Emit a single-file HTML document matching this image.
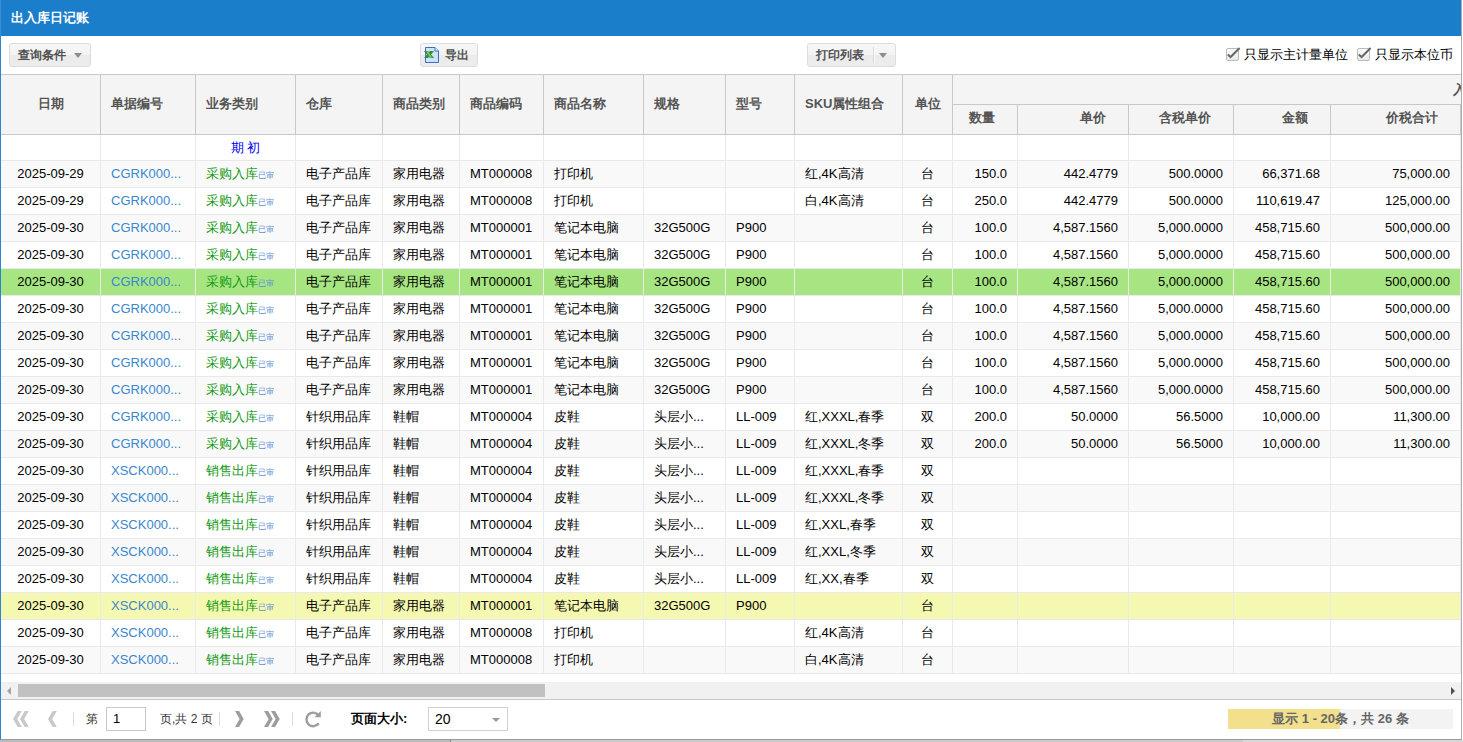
<!DOCTYPE html>
<html><head><meta charset="utf-8">
<style>
*{margin:0;padding:0;box-sizing:border-box}
html,body{width:1463px;height:742px;overflow:hidden;background:#fff}
body{font-family:"Liberation Sans",sans-serif;font-size:13px;color:#000;position:relative}
.a{position:absolute}
#panel{left:0;top:0;width:1462px;height:740px;border-left:1px solid #2a86d0;border-right:1px solid #acacac;border-bottom:1px solid #9a9a9a;background:#fff}
#title{left:0;top:0;width:1461px;height:36px;background:#1a7ecb;color:#fff;font-weight:bold;font-size:13px;line-height:36px;padding-left:11px}
.btn{height:24px;border:1px solid #dcdcdc;border-radius:3px;background:linear-gradient(#f7f7f7 0,#f3f3f3 50%,#ebebeb 50%,#ececec 100%);color:#505050;font-weight:bold;font-size:12px;line-height:22px}
.hd{background:#f4f4f4;color:#555;font-weight:bold;font-size:13px}
.ht{color:#555;font-weight:bold;font-size:13px;white-space:nowrap}
.vl{width:1px;background:#c8c8c8}
.hl{height:1px;background:#c8c8c8}
.cell{white-space:nowrap;overflow:hidden;line-height:26px;height:26px}
.dl{width:1px;background:#eaeaea}
.rl{height:1px;background:#e9e9e9}
</style></head><body>
<div id="panel" class="a"></div>
<div id="title" class="a">出入库日记账</div>
<div class="a" style="left:0;top:0;width:1px;height:36px;background:#3b90d4"></div>

<div class="a btn" style="left:9px;top:43px;width:82px;padding-left:8px">查询条件<svg class="a" style="left:64px;top:9px" width="8" height="5" viewBox="0 0 8 5"><polygon points="0,0 8,0 4,5" fill="#8c8c8c"/></svg></div>
<div class="a btn" style="left:420px;top:43px;width:58px;padding-left:24px">导出<svg class="a" style="left:3px;top:3px" width="17" height="18" viewBox="0 0 17 18"><path d="M1.5 0.5h9.5l3.5 3.5v11.5h-13z" fill="#cde1f8" stroke="#3b6fc4" stroke-width="1"/><path d="M11 0.5v3.5h3.5" fill="#f2f7fd" stroke="#3b6fc4" stroke-width="1"/><polygon points="0,4 4.2,4 5,5.6 5.8,4 10,4 7,7.5 10,11 5.8,11 5,9.4 4.2,11 0,11 3,7.5" fill="#2f8f2f"/><polygon points="2.2,4.5 4,4.5 8,10.5 6.2,10.5" fill="#86c986"/></svg></div>
<div class="a btn" style="left:807px;top:43px;width:89px;padding-left:8px">打印列表<span class="a" style="left:65px;top:3px;width:1px;height:16px;background:#d8d8d8;box-shadow:1px 0 0 #fafafa"></span><svg class="a" style="left:71px;top:9px" width="8" height="5" viewBox="0 0 8 5"><polygon points="0,0 8,0 4,5" fill="#8c8c8c"/></svg></div>
<div class="a" style="left:1226px;top:48px;width:13px;height:13px;border:1px solid #bbb;border-radius:2px;background:linear-gradient(#fdfdfd,#e9e9e9)"><svg class="a" style="left:0;top:-2px;overflow:visible" width="14" height="13" viewBox="0 0 14 13"><path d="M0.8 7.4l2.8 2.6 9-9" fill="none" stroke="#686868" stroke-width="2"/></svg></div>
<div class="a" style="left:1244px;top:46px;line-height:18px;font-size:13px;color:#000">只显示主计量单位</div>
<div class="a" style="left:1357px;top:48px;width:13px;height:13px;border:1px solid #bbb;border-radius:2px;background:linear-gradient(#fdfdfd,#e9e9e9)"><svg class="a" style="left:0;top:-2px;overflow:visible" width="14" height="13" viewBox="0 0 14 13"><path d="M0.8 7.4l2.8 2.6 9-9" fill="none" stroke="#686868" stroke-width="2"/></svg></div>
<div class="a" style="left:1375px;top:46px;line-height:18px;font-size:13px;color:#000">只显示本位币</div>
<div class="a hd" style="left:1px;top:74px;width:1460px;height:61px"></div>
<div class="a hl" style="left:1px;top:74px;width:1460px"></div>
<div class="a hl" style="left:1px;top:134px;width:1460px"></div>
<div class="a hl" style="left:952px;top:104px;width:508px"></div>
<div class="a vl" style="left:100px;top:74px;height:60px"></div>
<div class="a vl" style="left:195px;top:74px;height:60px"></div>
<div class="a vl" style="left:295px;top:74px;height:60px"></div>
<div class="a vl" style="left:382px;top:74px;height:60px"></div>
<div class="a vl" style="left:459px;top:74px;height:60px"></div>
<div class="a vl" style="left:543px;top:74px;height:60px"></div>
<div class="a vl" style="left:643px;top:74px;height:60px"></div>
<div class="a vl" style="left:725px;top:74px;height:60px"></div>
<div class="a vl" style="left:794px;top:74px;height:60px"></div>
<div class="a vl" style="left:902px;top:74px;height:60px"></div>
<div class="a vl" style="left:952px;top:74px;height:60px"></div>
<div class="a vl" style="left:1017px;top:104px;height:30px"></div>
<div class="a vl" style="left:1128px;top:104px;height:30px"></div>
<div class="a vl" style="left:1233px;top:104px;height:30px"></div>
<div class="a vl" style="left:1330px;top:104px;height:30px"></div>
<div class="a vl" style="left:1460px;top:104px;height:30px"></div>
<div class="a ht" style="left:1px;top:74px;width:99px;height:59px;line-height:59px;text-align:center">日期</div>
<div class="a ht" style="left:101px;top:74px;width:94px;height:59px;line-height:59px;text-align:left;padding-left:10px">单据编号</div>
<div class="a ht" style="left:196px;top:74px;width:99px;height:59px;line-height:59px;text-align:left;padding-left:10px">业务类别</div>
<div class="a ht" style="left:296px;top:74px;width:86px;height:59px;line-height:59px;text-align:left;padding-left:10px">仓库</div>
<div class="a ht" style="left:383px;top:74px;width:76px;height:59px;line-height:59px;text-align:left;padding-left:10px">商品类别</div>
<div class="a ht" style="left:460px;top:74px;width:83px;height:59px;line-height:59px;text-align:left;padding-left:10px">商品编码</div>
<div class="a ht" style="left:544px;top:74px;width:99px;height:59px;line-height:59px;text-align:left;padding-left:10px">商品名称</div>
<div class="a ht" style="left:644px;top:74px;width:81px;height:59px;line-height:59px;text-align:left;padding-left:10px">规格</div>
<div class="a ht" style="left:726px;top:74px;width:68px;height:59px;line-height:59px;text-align:left;padding-left:10px">型号</div>
<div class="a ht" style="left:795px;top:74px;width:107px;height:59px;line-height:59px;text-align:left;padding-left:10px">SKU属性组合</div>
<div class="a ht" style="left:903px;top:74px;width:49px;height:59px;line-height:59px;text-align:center">单位</div>
<div class="a ht" style="left:953px;top:103px;width:64px;height:29px;line-height:29px;text-align:center;padding-right:6px">数量</div>
<div class="a ht" style="left:1018px;top:103px;width:110px;height:29px;line-height:29px;text-align:right;padding-right:22px">单价</div>
<div class="a ht" style="left:1129px;top:103px;width:104px;height:29px;line-height:29px;text-align:right;padding-right:22px">含税单价</div>
<div class="a ht" style="left:1234px;top:103px;width:96px;height:29px;line-height:29px;text-align:right;padding-right:22px">金额</div>
<div class="a ht" style="left:1331px;top:103px;width:129px;height:29px;line-height:29px;text-align:right;padding-right:22px">价税合计</div>
<div class="a hd" style="left:1453px;top:76px;width:8px;height:27px;line-height:27px;overflow:hidden;white-space:nowrap">入库</div>
<div class="a" style="left:1px;top:135px;width:1460px;height:26px;background:#fff"></div>
<div class="a cell" style="left:196px;top:135px;width:99px;text-align:center;color:#0000ee">期 初</div>
<div class="a rl" style="left:1px;top:160px;width:1460px"></div>
<div class="a" style="left:1px;top:161px;width:1460px;height:27px;background:#f9f9f9"></div>
<div class="a cell" style="left:1px;top:161px;width:99px;text-align:center;color:#000">2025-09-29</div>
<div class="a cell" style="left:101px;top:161px;width:94px;text-align:left;padding-left:10px;color:#3a87cf">CGRK000...</div>
<div class="a cell" style="left:196px;top:161px;width:99px;text-align:left;padding-left:10px;color:#119911">采购入库<span style="font-size:8px;color:#5b8fd6">已审</span></div>
<div class="a cell" style="left:296px;top:161px;width:86px;text-align:left;padding-left:10px;color:#000">电子产品库</div>
<div class="a cell" style="left:383px;top:161px;width:76px;text-align:left;padding-left:10px;color:#000">家用电器</div>
<div class="a cell" style="left:460px;top:161px;width:83px;text-align:left;padding-left:10px;color:#000">MT000008</div>
<div class="a cell" style="left:544px;top:161px;width:99px;text-align:left;padding-left:10px;color:#000">打印机</div>
<div class="a cell" style="left:795px;top:161px;width:107px;text-align:left;padding-left:10px;color:#000">红,4K高清</div>
<div class="a cell" style="left:903px;top:161px;width:49px;text-align:center;color:#000">台</div>
<div class="a cell" style="left:953px;top:161px;width:64px;text-align:right;padding-right:10px;color:#000">150.0</div>
<div class="a cell" style="left:1018px;top:161px;width:110px;text-align:right;padding-right:10px;color:#000">442.4779</div>
<div class="a cell" style="left:1129px;top:161px;width:104px;text-align:right;padding-right:10px;color:#000">500.0000</div>
<div class="a cell" style="left:1234px;top:161px;width:96px;text-align:right;padding-right:10px;color:#000">66,371.68</div>
<div class="a cell" style="left:1331px;top:161px;width:129px;text-align:right;padding-right:10px;color:#000">75,000.00</div>
<div class="a rl" style="left:1px;top:187px;width:1460px"></div>
<div class="a" style="left:1px;top:188px;width:1460px;height:27px;background:#fff"></div>
<div class="a cell" style="left:1px;top:188px;width:99px;text-align:center;color:#000">2025-09-29</div>
<div class="a cell" style="left:101px;top:188px;width:94px;text-align:left;padding-left:10px;color:#3a87cf">CGRK000...</div>
<div class="a cell" style="left:196px;top:188px;width:99px;text-align:left;padding-left:10px;color:#119911">采购入库<span style="font-size:8px;color:#5b8fd6">已审</span></div>
<div class="a cell" style="left:296px;top:188px;width:86px;text-align:left;padding-left:10px;color:#000">电子产品库</div>
<div class="a cell" style="left:383px;top:188px;width:76px;text-align:left;padding-left:10px;color:#000">家用电器</div>
<div class="a cell" style="left:460px;top:188px;width:83px;text-align:left;padding-left:10px;color:#000">MT000008</div>
<div class="a cell" style="left:544px;top:188px;width:99px;text-align:left;padding-left:10px;color:#000">打印机</div>
<div class="a cell" style="left:795px;top:188px;width:107px;text-align:left;padding-left:10px;color:#000">白,4K高清</div>
<div class="a cell" style="left:903px;top:188px;width:49px;text-align:center;color:#000">台</div>
<div class="a cell" style="left:953px;top:188px;width:64px;text-align:right;padding-right:10px;color:#000">250.0</div>
<div class="a cell" style="left:1018px;top:188px;width:110px;text-align:right;padding-right:10px;color:#000">442.4779</div>
<div class="a cell" style="left:1129px;top:188px;width:104px;text-align:right;padding-right:10px;color:#000">500.0000</div>
<div class="a cell" style="left:1234px;top:188px;width:96px;text-align:right;padding-right:10px;color:#000">110,619.47</div>
<div class="a cell" style="left:1331px;top:188px;width:129px;text-align:right;padding-right:10px;color:#000">125,000.00</div>
<div class="a rl" style="left:1px;top:214px;width:1460px"></div>
<div class="a" style="left:1px;top:215px;width:1460px;height:27px;background:#f9f9f9"></div>
<div class="a cell" style="left:1px;top:215px;width:99px;text-align:center;color:#000">2025-09-30</div>
<div class="a cell" style="left:101px;top:215px;width:94px;text-align:left;padding-left:10px;color:#3a87cf">CGRK000...</div>
<div class="a cell" style="left:196px;top:215px;width:99px;text-align:left;padding-left:10px;color:#119911">采购入库<span style="font-size:8px;color:#5b8fd6">已审</span></div>
<div class="a cell" style="left:296px;top:215px;width:86px;text-align:left;padding-left:10px;color:#000">电子产品库</div>
<div class="a cell" style="left:383px;top:215px;width:76px;text-align:left;padding-left:10px;color:#000">家用电器</div>
<div class="a cell" style="left:460px;top:215px;width:83px;text-align:left;padding-left:10px;color:#000">MT000001</div>
<div class="a cell" style="left:544px;top:215px;width:99px;text-align:left;padding-left:10px;color:#000">笔记本电脑</div>
<div class="a cell" style="left:644px;top:215px;width:81px;text-align:left;padding-left:10px;color:#000">32G500G</div>
<div class="a cell" style="left:726px;top:215px;width:68px;text-align:left;padding-left:10px;color:#000">P900</div>
<div class="a cell" style="left:903px;top:215px;width:49px;text-align:center;color:#000">台</div>
<div class="a cell" style="left:953px;top:215px;width:64px;text-align:right;padding-right:10px;color:#000">100.0</div>
<div class="a cell" style="left:1018px;top:215px;width:110px;text-align:right;padding-right:10px;color:#000">4,587.1560</div>
<div class="a cell" style="left:1129px;top:215px;width:104px;text-align:right;padding-right:10px;color:#000">5,000.0000</div>
<div class="a cell" style="left:1234px;top:215px;width:96px;text-align:right;padding-right:10px;color:#000">458,715.60</div>
<div class="a cell" style="left:1331px;top:215px;width:129px;text-align:right;padding-right:10px;color:#000">500,000.00</div>
<div class="a rl" style="left:1px;top:241px;width:1460px"></div>
<div class="a" style="left:1px;top:242px;width:1460px;height:27px;background:#fff"></div>
<div class="a cell" style="left:1px;top:242px;width:99px;text-align:center;color:#000">2025-09-30</div>
<div class="a cell" style="left:101px;top:242px;width:94px;text-align:left;padding-left:10px;color:#3a87cf">CGRK000...</div>
<div class="a cell" style="left:196px;top:242px;width:99px;text-align:left;padding-left:10px;color:#119911">采购入库<span style="font-size:8px;color:#5b8fd6">已审</span></div>
<div class="a cell" style="left:296px;top:242px;width:86px;text-align:left;padding-left:10px;color:#000">电子产品库</div>
<div class="a cell" style="left:383px;top:242px;width:76px;text-align:left;padding-left:10px;color:#000">家用电器</div>
<div class="a cell" style="left:460px;top:242px;width:83px;text-align:left;padding-left:10px;color:#000">MT000001</div>
<div class="a cell" style="left:544px;top:242px;width:99px;text-align:left;padding-left:10px;color:#000">笔记本电脑</div>
<div class="a cell" style="left:644px;top:242px;width:81px;text-align:left;padding-left:10px;color:#000">32G500G</div>
<div class="a cell" style="left:726px;top:242px;width:68px;text-align:left;padding-left:10px;color:#000">P900</div>
<div class="a cell" style="left:903px;top:242px;width:49px;text-align:center;color:#000">台</div>
<div class="a cell" style="left:953px;top:242px;width:64px;text-align:right;padding-right:10px;color:#000">100.0</div>
<div class="a cell" style="left:1018px;top:242px;width:110px;text-align:right;padding-right:10px;color:#000">4,587.1560</div>
<div class="a cell" style="left:1129px;top:242px;width:104px;text-align:right;padding-right:10px;color:#000">5,000.0000</div>
<div class="a cell" style="left:1234px;top:242px;width:96px;text-align:right;padding-right:10px;color:#000">458,715.60</div>
<div class="a cell" style="left:1331px;top:242px;width:129px;text-align:right;padding-right:10px;color:#000">500,000.00</div>
<div class="a rl" style="left:1px;top:268px;width:1460px"></div>
<div class="a" style="left:1px;top:269px;width:1460px;height:27px;background:#a6e582"></div>
<div class="a cell" style="left:1px;top:269px;width:99px;text-align:center;color:#000">2025-09-30</div>
<div class="a cell" style="left:101px;top:269px;width:94px;text-align:left;padding-left:10px;color:#3a87cf">CGRK000...</div>
<div class="a cell" style="left:196px;top:269px;width:99px;text-align:left;padding-left:10px;color:#119911">采购入库<span style="font-size:8px;color:#5b8fd6">已审</span></div>
<div class="a cell" style="left:296px;top:269px;width:86px;text-align:left;padding-left:10px;color:#000">电子产品库</div>
<div class="a cell" style="left:383px;top:269px;width:76px;text-align:left;padding-left:10px;color:#000">家用电器</div>
<div class="a cell" style="left:460px;top:269px;width:83px;text-align:left;padding-left:10px;color:#000">MT000001</div>
<div class="a cell" style="left:544px;top:269px;width:99px;text-align:left;padding-left:10px;color:#000">笔记本电脑</div>
<div class="a cell" style="left:644px;top:269px;width:81px;text-align:left;padding-left:10px;color:#000">32G500G</div>
<div class="a cell" style="left:726px;top:269px;width:68px;text-align:left;padding-left:10px;color:#000">P900</div>
<div class="a cell" style="left:903px;top:269px;width:49px;text-align:center;color:#000">台</div>
<div class="a cell" style="left:953px;top:269px;width:64px;text-align:right;padding-right:10px;color:#000">100.0</div>
<div class="a cell" style="left:1018px;top:269px;width:110px;text-align:right;padding-right:10px;color:#000">4,587.1560</div>
<div class="a cell" style="left:1129px;top:269px;width:104px;text-align:right;padding-right:10px;color:#000">5,000.0000</div>
<div class="a cell" style="left:1234px;top:269px;width:96px;text-align:right;padding-right:10px;color:#000">458,715.60</div>
<div class="a cell" style="left:1331px;top:269px;width:129px;text-align:right;padding-right:10px;color:#000">500,000.00</div>
<div class="a rl" style="left:1px;top:295px;width:1460px"></div>
<div class="a" style="left:1px;top:296px;width:1460px;height:27px;background:#fff"></div>
<div class="a cell" style="left:1px;top:296px;width:99px;text-align:center;color:#000">2025-09-30</div>
<div class="a cell" style="left:101px;top:296px;width:94px;text-align:left;padding-left:10px;color:#3a87cf">CGRK000...</div>
<div class="a cell" style="left:196px;top:296px;width:99px;text-align:left;padding-left:10px;color:#119911">采购入库<span style="font-size:8px;color:#5b8fd6">已审</span></div>
<div class="a cell" style="left:296px;top:296px;width:86px;text-align:left;padding-left:10px;color:#000">电子产品库</div>
<div class="a cell" style="left:383px;top:296px;width:76px;text-align:left;padding-left:10px;color:#000">家用电器</div>
<div class="a cell" style="left:460px;top:296px;width:83px;text-align:left;padding-left:10px;color:#000">MT000001</div>
<div class="a cell" style="left:544px;top:296px;width:99px;text-align:left;padding-left:10px;color:#000">笔记本电脑</div>
<div class="a cell" style="left:644px;top:296px;width:81px;text-align:left;padding-left:10px;color:#000">32G500G</div>
<div class="a cell" style="left:726px;top:296px;width:68px;text-align:left;padding-left:10px;color:#000">P900</div>
<div class="a cell" style="left:903px;top:296px;width:49px;text-align:center;color:#000">台</div>
<div class="a cell" style="left:953px;top:296px;width:64px;text-align:right;padding-right:10px;color:#000">100.0</div>
<div class="a cell" style="left:1018px;top:296px;width:110px;text-align:right;padding-right:10px;color:#000">4,587.1560</div>
<div class="a cell" style="left:1129px;top:296px;width:104px;text-align:right;padding-right:10px;color:#000">5,000.0000</div>
<div class="a cell" style="left:1234px;top:296px;width:96px;text-align:right;padding-right:10px;color:#000">458,715.60</div>
<div class="a cell" style="left:1331px;top:296px;width:129px;text-align:right;padding-right:10px;color:#000">500,000.00</div>
<div class="a rl" style="left:1px;top:322px;width:1460px"></div>
<div class="a" style="left:1px;top:323px;width:1460px;height:27px;background:#f9f9f9"></div>
<div class="a cell" style="left:1px;top:323px;width:99px;text-align:center;color:#000">2025-09-30</div>
<div class="a cell" style="left:101px;top:323px;width:94px;text-align:left;padding-left:10px;color:#3a87cf">CGRK000...</div>
<div class="a cell" style="left:196px;top:323px;width:99px;text-align:left;padding-left:10px;color:#119911">采购入库<span style="font-size:8px;color:#5b8fd6">已审</span></div>
<div class="a cell" style="left:296px;top:323px;width:86px;text-align:left;padding-left:10px;color:#000">电子产品库</div>
<div class="a cell" style="left:383px;top:323px;width:76px;text-align:left;padding-left:10px;color:#000">家用电器</div>
<div class="a cell" style="left:460px;top:323px;width:83px;text-align:left;padding-left:10px;color:#000">MT000001</div>
<div class="a cell" style="left:544px;top:323px;width:99px;text-align:left;padding-left:10px;color:#000">笔记本电脑</div>
<div class="a cell" style="left:644px;top:323px;width:81px;text-align:left;padding-left:10px;color:#000">32G500G</div>
<div class="a cell" style="left:726px;top:323px;width:68px;text-align:left;padding-left:10px;color:#000">P900</div>
<div class="a cell" style="left:903px;top:323px;width:49px;text-align:center;color:#000">台</div>
<div class="a cell" style="left:953px;top:323px;width:64px;text-align:right;padding-right:10px;color:#000">100.0</div>
<div class="a cell" style="left:1018px;top:323px;width:110px;text-align:right;padding-right:10px;color:#000">4,587.1560</div>
<div class="a cell" style="left:1129px;top:323px;width:104px;text-align:right;padding-right:10px;color:#000">5,000.0000</div>
<div class="a cell" style="left:1234px;top:323px;width:96px;text-align:right;padding-right:10px;color:#000">458,715.60</div>
<div class="a cell" style="left:1331px;top:323px;width:129px;text-align:right;padding-right:10px;color:#000">500,000.00</div>
<div class="a rl" style="left:1px;top:349px;width:1460px"></div>
<div class="a" style="left:1px;top:350px;width:1460px;height:27px;background:#fff"></div>
<div class="a cell" style="left:1px;top:350px;width:99px;text-align:center;color:#000">2025-09-30</div>
<div class="a cell" style="left:101px;top:350px;width:94px;text-align:left;padding-left:10px;color:#3a87cf">CGRK000...</div>
<div class="a cell" style="left:196px;top:350px;width:99px;text-align:left;padding-left:10px;color:#119911">采购入库<span style="font-size:8px;color:#5b8fd6">已审</span></div>
<div class="a cell" style="left:296px;top:350px;width:86px;text-align:left;padding-left:10px;color:#000">电子产品库</div>
<div class="a cell" style="left:383px;top:350px;width:76px;text-align:left;padding-left:10px;color:#000">家用电器</div>
<div class="a cell" style="left:460px;top:350px;width:83px;text-align:left;padding-left:10px;color:#000">MT000001</div>
<div class="a cell" style="left:544px;top:350px;width:99px;text-align:left;padding-left:10px;color:#000">笔记本电脑</div>
<div class="a cell" style="left:644px;top:350px;width:81px;text-align:left;padding-left:10px;color:#000">32G500G</div>
<div class="a cell" style="left:726px;top:350px;width:68px;text-align:left;padding-left:10px;color:#000">P900</div>
<div class="a cell" style="left:903px;top:350px;width:49px;text-align:center;color:#000">台</div>
<div class="a cell" style="left:953px;top:350px;width:64px;text-align:right;padding-right:10px;color:#000">100.0</div>
<div class="a cell" style="left:1018px;top:350px;width:110px;text-align:right;padding-right:10px;color:#000">4,587.1560</div>
<div class="a cell" style="left:1129px;top:350px;width:104px;text-align:right;padding-right:10px;color:#000">5,000.0000</div>
<div class="a cell" style="left:1234px;top:350px;width:96px;text-align:right;padding-right:10px;color:#000">458,715.60</div>
<div class="a cell" style="left:1331px;top:350px;width:129px;text-align:right;padding-right:10px;color:#000">500,000.00</div>
<div class="a rl" style="left:1px;top:376px;width:1460px"></div>
<div class="a" style="left:1px;top:377px;width:1460px;height:27px;background:#f9f9f9"></div>
<div class="a cell" style="left:1px;top:377px;width:99px;text-align:center;color:#000">2025-09-30</div>
<div class="a cell" style="left:101px;top:377px;width:94px;text-align:left;padding-left:10px;color:#3a87cf">CGRK000...</div>
<div class="a cell" style="left:196px;top:377px;width:99px;text-align:left;padding-left:10px;color:#119911">采购入库<span style="font-size:8px;color:#5b8fd6">已审</span></div>
<div class="a cell" style="left:296px;top:377px;width:86px;text-align:left;padding-left:10px;color:#000">电子产品库</div>
<div class="a cell" style="left:383px;top:377px;width:76px;text-align:left;padding-left:10px;color:#000">家用电器</div>
<div class="a cell" style="left:460px;top:377px;width:83px;text-align:left;padding-left:10px;color:#000">MT000001</div>
<div class="a cell" style="left:544px;top:377px;width:99px;text-align:left;padding-left:10px;color:#000">笔记本电脑</div>
<div class="a cell" style="left:644px;top:377px;width:81px;text-align:left;padding-left:10px;color:#000">32G500G</div>
<div class="a cell" style="left:726px;top:377px;width:68px;text-align:left;padding-left:10px;color:#000">P900</div>
<div class="a cell" style="left:903px;top:377px;width:49px;text-align:center;color:#000">台</div>
<div class="a cell" style="left:953px;top:377px;width:64px;text-align:right;padding-right:10px;color:#000">100.0</div>
<div class="a cell" style="left:1018px;top:377px;width:110px;text-align:right;padding-right:10px;color:#000">4,587.1560</div>
<div class="a cell" style="left:1129px;top:377px;width:104px;text-align:right;padding-right:10px;color:#000">5,000.0000</div>
<div class="a cell" style="left:1234px;top:377px;width:96px;text-align:right;padding-right:10px;color:#000">458,715.60</div>
<div class="a cell" style="left:1331px;top:377px;width:129px;text-align:right;padding-right:10px;color:#000">500,000.00</div>
<div class="a rl" style="left:1px;top:403px;width:1460px"></div>
<div class="a" style="left:1px;top:404px;width:1460px;height:27px;background:#fff"></div>
<div class="a cell" style="left:1px;top:404px;width:99px;text-align:center;color:#000">2025-09-30</div>
<div class="a cell" style="left:101px;top:404px;width:94px;text-align:left;padding-left:10px;color:#3a87cf">CGRK000...</div>
<div class="a cell" style="left:196px;top:404px;width:99px;text-align:left;padding-left:10px;color:#119911">采购入库<span style="font-size:8px;color:#5b8fd6">已审</span></div>
<div class="a cell" style="left:296px;top:404px;width:86px;text-align:left;padding-left:10px;color:#000">针织用品库</div>
<div class="a cell" style="left:383px;top:404px;width:76px;text-align:left;padding-left:10px;color:#000">鞋帽</div>
<div class="a cell" style="left:460px;top:404px;width:83px;text-align:left;padding-left:10px;color:#000">MT000004</div>
<div class="a cell" style="left:544px;top:404px;width:99px;text-align:left;padding-left:10px;color:#000">皮鞋</div>
<div class="a cell" style="left:644px;top:404px;width:81px;text-align:left;padding-left:10px;color:#000">头层小...</div>
<div class="a cell" style="left:726px;top:404px;width:68px;text-align:left;padding-left:10px;color:#000">LL-009</div>
<div class="a cell" style="left:795px;top:404px;width:107px;text-align:left;padding-left:10px;color:#000">红,XXXL,春季</div>
<div class="a cell" style="left:903px;top:404px;width:49px;text-align:center;color:#000">双</div>
<div class="a cell" style="left:953px;top:404px;width:64px;text-align:right;padding-right:10px;color:#000">200.0</div>
<div class="a cell" style="left:1018px;top:404px;width:110px;text-align:right;padding-right:10px;color:#000">50.0000</div>
<div class="a cell" style="left:1129px;top:404px;width:104px;text-align:right;padding-right:10px;color:#000">56.5000</div>
<div class="a cell" style="left:1234px;top:404px;width:96px;text-align:right;padding-right:10px;color:#000">10,000.00</div>
<div class="a cell" style="left:1331px;top:404px;width:129px;text-align:right;padding-right:10px;color:#000">11,300.00</div>
<div class="a rl" style="left:1px;top:430px;width:1460px"></div>
<div class="a" style="left:1px;top:431px;width:1460px;height:27px;background:#f9f9f9"></div>
<div class="a cell" style="left:1px;top:431px;width:99px;text-align:center;color:#000">2025-09-30</div>
<div class="a cell" style="left:101px;top:431px;width:94px;text-align:left;padding-left:10px;color:#3a87cf">CGRK000...</div>
<div class="a cell" style="left:196px;top:431px;width:99px;text-align:left;padding-left:10px;color:#119911">采购入库<span style="font-size:8px;color:#5b8fd6">已审</span></div>
<div class="a cell" style="left:296px;top:431px;width:86px;text-align:left;padding-left:10px;color:#000">针织用品库</div>
<div class="a cell" style="left:383px;top:431px;width:76px;text-align:left;padding-left:10px;color:#000">鞋帽</div>
<div class="a cell" style="left:460px;top:431px;width:83px;text-align:left;padding-left:10px;color:#000">MT000004</div>
<div class="a cell" style="left:544px;top:431px;width:99px;text-align:left;padding-left:10px;color:#000">皮鞋</div>
<div class="a cell" style="left:644px;top:431px;width:81px;text-align:left;padding-left:10px;color:#000">头层小...</div>
<div class="a cell" style="left:726px;top:431px;width:68px;text-align:left;padding-left:10px;color:#000">LL-009</div>
<div class="a cell" style="left:795px;top:431px;width:107px;text-align:left;padding-left:10px;color:#000">红,XXXL,冬季</div>
<div class="a cell" style="left:903px;top:431px;width:49px;text-align:center;color:#000">双</div>
<div class="a cell" style="left:953px;top:431px;width:64px;text-align:right;padding-right:10px;color:#000">200.0</div>
<div class="a cell" style="left:1018px;top:431px;width:110px;text-align:right;padding-right:10px;color:#000">50.0000</div>
<div class="a cell" style="left:1129px;top:431px;width:104px;text-align:right;padding-right:10px;color:#000">56.5000</div>
<div class="a cell" style="left:1234px;top:431px;width:96px;text-align:right;padding-right:10px;color:#000">10,000.00</div>
<div class="a cell" style="left:1331px;top:431px;width:129px;text-align:right;padding-right:10px;color:#000">11,300.00</div>
<div class="a rl" style="left:1px;top:457px;width:1460px"></div>
<div class="a" style="left:1px;top:458px;width:1460px;height:27px;background:#fff"></div>
<div class="a cell" style="left:1px;top:458px;width:99px;text-align:center;color:#000">2025-09-30</div>
<div class="a cell" style="left:101px;top:458px;width:94px;text-align:left;padding-left:10px;color:#3a87cf">XSCK000...</div>
<div class="a cell" style="left:196px;top:458px;width:99px;text-align:left;padding-left:10px;color:#119911">销售出库<span style="font-size:8px;color:#5b8fd6">已审</span></div>
<div class="a cell" style="left:296px;top:458px;width:86px;text-align:left;padding-left:10px;color:#000">针织用品库</div>
<div class="a cell" style="left:383px;top:458px;width:76px;text-align:left;padding-left:10px;color:#000">鞋帽</div>
<div class="a cell" style="left:460px;top:458px;width:83px;text-align:left;padding-left:10px;color:#000">MT000004</div>
<div class="a cell" style="left:544px;top:458px;width:99px;text-align:left;padding-left:10px;color:#000">皮鞋</div>
<div class="a cell" style="left:644px;top:458px;width:81px;text-align:left;padding-left:10px;color:#000">头层小...</div>
<div class="a cell" style="left:726px;top:458px;width:68px;text-align:left;padding-left:10px;color:#000">LL-009</div>
<div class="a cell" style="left:795px;top:458px;width:107px;text-align:left;padding-left:10px;color:#000">红,XXXL,春季</div>
<div class="a cell" style="left:903px;top:458px;width:49px;text-align:center;color:#000">双</div>
<div class="a rl" style="left:1px;top:484px;width:1460px"></div>
<div class="a" style="left:1px;top:485px;width:1460px;height:27px;background:#f9f9f9"></div>
<div class="a cell" style="left:1px;top:485px;width:99px;text-align:center;color:#000">2025-09-30</div>
<div class="a cell" style="left:101px;top:485px;width:94px;text-align:left;padding-left:10px;color:#3a87cf">XSCK000...</div>
<div class="a cell" style="left:196px;top:485px;width:99px;text-align:left;padding-left:10px;color:#119911">销售出库<span style="font-size:8px;color:#5b8fd6">已审</span></div>
<div class="a cell" style="left:296px;top:485px;width:86px;text-align:left;padding-left:10px;color:#000">针织用品库</div>
<div class="a cell" style="left:383px;top:485px;width:76px;text-align:left;padding-left:10px;color:#000">鞋帽</div>
<div class="a cell" style="left:460px;top:485px;width:83px;text-align:left;padding-left:10px;color:#000">MT000004</div>
<div class="a cell" style="left:544px;top:485px;width:99px;text-align:left;padding-left:10px;color:#000">皮鞋</div>
<div class="a cell" style="left:644px;top:485px;width:81px;text-align:left;padding-left:10px;color:#000">头层小...</div>
<div class="a cell" style="left:726px;top:485px;width:68px;text-align:left;padding-left:10px;color:#000">LL-009</div>
<div class="a cell" style="left:795px;top:485px;width:107px;text-align:left;padding-left:10px;color:#000">红,XXXL,冬季</div>
<div class="a cell" style="left:903px;top:485px;width:49px;text-align:center;color:#000">双</div>
<div class="a rl" style="left:1px;top:511px;width:1460px"></div>
<div class="a" style="left:1px;top:512px;width:1460px;height:27px;background:#fff"></div>
<div class="a cell" style="left:1px;top:512px;width:99px;text-align:center;color:#000">2025-09-30</div>
<div class="a cell" style="left:101px;top:512px;width:94px;text-align:left;padding-left:10px;color:#3a87cf">XSCK000...</div>
<div class="a cell" style="left:196px;top:512px;width:99px;text-align:left;padding-left:10px;color:#119911">销售出库<span style="font-size:8px;color:#5b8fd6">已审</span></div>
<div class="a cell" style="left:296px;top:512px;width:86px;text-align:left;padding-left:10px;color:#000">针织用品库</div>
<div class="a cell" style="left:383px;top:512px;width:76px;text-align:left;padding-left:10px;color:#000">鞋帽</div>
<div class="a cell" style="left:460px;top:512px;width:83px;text-align:left;padding-left:10px;color:#000">MT000004</div>
<div class="a cell" style="left:544px;top:512px;width:99px;text-align:left;padding-left:10px;color:#000">皮鞋</div>
<div class="a cell" style="left:644px;top:512px;width:81px;text-align:left;padding-left:10px;color:#000">头层小...</div>
<div class="a cell" style="left:726px;top:512px;width:68px;text-align:left;padding-left:10px;color:#000">LL-009</div>
<div class="a cell" style="left:795px;top:512px;width:107px;text-align:left;padding-left:10px;color:#000">红,XXL,春季</div>
<div class="a cell" style="left:903px;top:512px;width:49px;text-align:center;color:#000">双</div>
<div class="a rl" style="left:1px;top:538px;width:1460px"></div>
<div class="a" style="left:1px;top:539px;width:1460px;height:27px;background:#f9f9f9"></div>
<div class="a cell" style="left:1px;top:539px;width:99px;text-align:center;color:#000">2025-09-30</div>
<div class="a cell" style="left:101px;top:539px;width:94px;text-align:left;padding-left:10px;color:#3a87cf">XSCK000...</div>
<div class="a cell" style="left:196px;top:539px;width:99px;text-align:left;padding-left:10px;color:#119911">销售出库<span style="font-size:8px;color:#5b8fd6">已审</span></div>
<div class="a cell" style="left:296px;top:539px;width:86px;text-align:left;padding-left:10px;color:#000">针织用品库</div>
<div class="a cell" style="left:383px;top:539px;width:76px;text-align:left;padding-left:10px;color:#000">鞋帽</div>
<div class="a cell" style="left:460px;top:539px;width:83px;text-align:left;padding-left:10px;color:#000">MT000004</div>
<div class="a cell" style="left:544px;top:539px;width:99px;text-align:left;padding-left:10px;color:#000">皮鞋</div>
<div class="a cell" style="left:644px;top:539px;width:81px;text-align:left;padding-left:10px;color:#000">头层小...</div>
<div class="a cell" style="left:726px;top:539px;width:68px;text-align:left;padding-left:10px;color:#000">LL-009</div>
<div class="a cell" style="left:795px;top:539px;width:107px;text-align:left;padding-left:10px;color:#000">红,XXL,冬季</div>
<div class="a cell" style="left:903px;top:539px;width:49px;text-align:center;color:#000">双</div>
<div class="a rl" style="left:1px;top:565px;width:1460px"></div>
<div class="a" style="left:1px;top:566px;width:1460px;height:27px;background:#fff"></div>
<div class="a cell" style="left:1px;top:566px;width:99px;text-align:center;color:#000">2025-09-30</div>
<div class="a cell" style="left:101px;top:566px;width:94px;text-align:left;padding-left:10px;color:#3a87cf">XSCK000...</div>
<div class="a cell" style="left:196px;top:566px;width:99px;text-align:left;padding-left:10px;color:#119911">销售出库<span style="font-size:8px;color:#5b8fd6">已审</span></div>
<div class="a cell" style="left:296px;top:566px;width:86px;text-align:left;padding-left:10px;color:#000">针织用品库</div>
<div class="a cell" style="left:383px;top:566px;width:76px;text-align:left;padding-left:10px;color:#000">鞋帽</div>
<div class="a cell" style="left:460px;top:566px;width:83px;text-align:left;padding-left:10px;color:#000">MT000004</div>
<div class="a cell" style="left:544px;top:566px;width:99px;text-align:left;padding-left:10px;color:#000">皮鞋</div>
<div class="a cell" style="left:644px;top:566px;width:81px;text-align:left;padding-left:10px;color:#000">头层小...</div>
<div class="a cell" style="left:726px;top:566px;width:68px;text-align:left;padding-left:10px;color:#000">LL-009</div>
<div class="a cell" style="left:795px;top:566px;width:107px;text-align:left;padding-left:10px;color:#000">红,XX,春季</div>
<div class="a cell" style="left:903px;top:566px;width:49px;text-align:center;color:#000">双</div>
<div class="a rl" style="left:1px;top:592px;width:1460px"></div>
<div class="a" style="left:1px;top:593px;width:1460px;height:27px;background:#f5f8b0"></div>
<div class="a cell" style="left:1px;top:593px;width:99px;text-align:center;color:#000">2025-09-30</div>
<div class="a cell" style="left:101px;top:593px;width:94px;text-align:left;padding-left:10px;color:#3a87cf">XSCK000...</div>
<div class="a cell" style="left:196px;top:593px;width:99px;text-align:left;padding-left:10px;color:#119911">销售出库<span style="font-size:8px;color:#5b8fd6">已审</span></div>
<div class="a cell" style="left:296px;top:593px;width:86px;text-align:left;padding-left:10px;color:#000">电子产品库</div>
<div class="a cell" style="left:383px;top:593px;width:76px;text-align:left;padding-left:10px;color:#000">家用电器</div>
<div class="a cell" style="left:460px;top:593px;width:83px;text-align:left;padding-left:10px;color:#000">MT000001</div>
<div class="a cell" style="left:544px;top:593px;width:99px;text-align:left;padding-left:10px;color:#000">笔记本电脑</div>
<div class="a cell" style="left:644px;top:593px;width:81px;text-align:left;padding-left:10px;color:#000">32G500G</div>
<div class="a cell" style="left:726px;top:593px;width:68px;text-align:left;padding-left:10px;color:#000">P900</div>
<div class="a cell" style="left:903px;top:593px;width:49px;text-align:center;color:#000">台</div>
<div class="a rl" style="left:1px;top:619px;width:1460px"></div>
<div class="a" style="left:1px;top:620px;width:1460px;height:27px;background:#fff"></div>
<div class="a cell" style="left:1px;top:620px;width:99px;text-align:center;color:#000">2025-09-30</div>
<div class="a cell" style="left:101px;top:620px;width:94px;text-align:left;padding-left:10px;color:#3a87cf">XSCK000...</div>
<div class="a cell" style="left:196px;top:620px;width:99px;text-align:left;padding-left:10px;color:#119911">销售出库<span style="font-size:8px;color:#5b8fd6">已审</span></div>
<div class="a cell" style="left:296px;top:620px;width:86px;text-align:left;padding-left:10px;color:#000">电子产品库</div>
<div class="a cell" style="left:383px;top:620px;width:76px;text-align:left;padding-left:10px;color:#000">家用电器</div>
<div class="a cell" style="left:460px;top:620px;width:83px;text-align:left;padding-left:10px;color:#000">MT000008</div>
<div class="a cell" style="left:544px;top:620px;width:99px;text-align:left;padding-left:10px;color:#000">打印机</div>
<div class="a cell" style="left:795px;top:620px;width:107px;text-align:left;padding-left:10px;color:#000">红,4K高清</div>
<div class="a cell" style="left:903px;top:620px;width:49px;text-align:center;color:#000">台</div>
<div class="a rl" style="left:1px;top:646px;width:1460px"></div>
<div class="a" style="left:1px;top:647px;width:1460px;height:27px;background:#f9f9f9"></div>
<div class="a cell" style="left:1px;top:647px;width:99px;text-align:center;color:#000">2025-09-30</div>
<div class="a cell" style="left:101px;top:647px;width:94px;text-align:left;padding-left:10px;color:#3a87cf">XSCK000...</div>
<div class="a cell" style="left:196px;top:647px;width:99px;text-align:left;padding-left:10px;color:#119911">销售出库<span style="font-size:8px;color:#5b8fd6">已审</span></div>
<div class="a cell" style="left:296px;top:647px;width:86px;text-align:left;padding-left:10px;color:#000">电子产品库</div>
<div class="a cell" style="left:383px;top:647px;width:76px;text-align:left;padding-left:10px;color:#000">家用电器</div>
<div class="a cell" style="left:460px;top:647px;width:83px;text-align:left;padding-left:10px;color:#000">MT000008</div>
<div class="a cell" style="left:544px;top:647px;width:99px;text-align:left;padding-left:10px;color:#000">打印机</div>
<div class="a cell" style="left:795px;top:647px;width:107px;text-align:left;padding-left:10px;color:#000">白,4K高清</div>
<div class="a cell" style="left:903px;top:647px;width:49px;text-align:center;color:#000">台</div>
<div class="a rl" style="left:1px;top:673px;width:1460px"></div>
<div class="a dl" style="left:100px;top:135px;height:538px"></div>
<div class="a dl" style="left:195px;top:135px;height:538px"></div>
<div class="a dl" style="left:295px;top:135px;height:538px"></div>
<div class="a dl" style="left:382px;top:135px;height:538px"></div>
<div class="a dl" style="left:459px;top:135px;height:538px"></div>
<div class="a dl" style="left:543px;top:135px;height:538px"></div>
<div class="a dl" style="left:643px;top:135px;height:538px"></div>
<div class="a dl" style="left:725px;top:135px;height:538px"></div>
<div class="a dl" style="left:794px;top:135px;height:538px"></div>
<div class="a dl" style="left:902px;top:135px;height:538px"></div>
<div class="a dl" style="left:952px;top:135px;height:538px"></div>
<div class="a dl" style="left:1017px;top:135px;height:538px"></div>
<div class="a dl" style="left:1128px;top:135px;height:538px"></div>
<div class="a dl" style="left:1233px;top:135px;height:538px"></div>
<div class="a dl" style="left:1330px;top:135px;height:538px"></div>
<div class="a dl" style="left:1460px;top:135px;height:538px"></div>
<div class="a" style="left:1px;top:682px;width:1460px;height:17px;background:#f1f1f1"></div>
<div class="a" style="left:18px;top:684px;width:527px;height:13px;background:#c1c1c1"></div>
<div class="a" style="left:7px;top:687px;width:0;height:0;border-top:4px solid transparent;border-bottom:4px solid transparent;border-right:4px solid #a3a3a3"></div>
<div class="a" style="left:1451px;top:687px;width:0;height:0;border-top:4px solid transparent;border-bottom:4px solid transparent;border-left:4px solid #505050"></div>
<div class="a hl" style="left:1px;top:699px;width:1460px;background:#c8c8c8"></div>
<svg class="a" style="left:13px;top:711px" width="17" height="16" viewBox="0 0 17 16"><polygon points="4.7,0 8.8,0 4.2,8 8.8,16 4.7,16 0,8" fill="#c9c9c9"/><polygon points="4.7,0 8.8,0 4.2,8 8.8,16 4.7,16 0,8" fill="#c9c9c9" transform="translate(7,0)"/></svg>
<svg class="a" style="left:48px;top:711px" width="10" height="16" viewBox="0 0 10 16"><polygon points="4.7,0 8.8,0 4.2,8 8.8,16 4.7,16 0,8" fill="#c9c9c9"/></svg>
<div class="a" style="left:73px;top:712px;width:1px;height:14px;background:#ddd"></div>
<div class="a" style="left:86px;top:710px;font-size:12px;line-height:18px;color:#333">第</div>
<div class="a" style="left:106px;top:707px;width:40px;height:24px;border:1px solid #c8c8c8;font-size:13px;line-height:22px;padding-left:6px;color:#000">1</div>
<div class="a" style="left:160px;top:710px;font-size:12px;line-height:18px;color:#333">页,共 2 页</div>
<div class="a" style="left:219px;top:712px;width:1px;height:14px;background:#ddd"></div>
<svg class="a" style="left:235px;top:711px" width="10" height="16" viewBox="0 0 10 16"><polygon points="0,0 4.1,0 8.7,8 4.1,16 0,16 4.6,8" fill="#9d9d9d"/></svg>
<svg class="a" style="left:264px;top:711px" width="17" height="16" viewBox="0 0 17 16"><polygon points="0,0 4.1,0 8.7,8 4.1,16 0,16 4.6,8" fill="#9d9d9d"/><polygon points="0,0 4.1,0 8.7,8 4.1,16 0,16 4.6,8" fill="#9d9d9d" transform="translate(7,0)"/></svg>
<div class="a" style="left:292px;top:712px;width:1px;height:14px;background:#ddd"></div>
<svg class="a" style="left:304px;top:711px" width="18" height="17" viewBox="0 0 18 17"><path d="M14.8 12.3A6.8 6.8 0 1 1 14.6 4.2" fill="none" stroke="#9d9d9d" stroke-width="2.4"/><path d="M10.4 6.2h6.4v-6.1z" fill="#9d9d9d"/></svg>
<div class="a" style="left:351px;top:710px;font-size:13px;line-height:18px;color:#000;font-weight:bold">页面大小:</div>
<div class="a" style="left:428px;top:707px;width:80px;height:24px;border:1px solid #d2d2d2;font-size:14px;line-height:23px;padding-left:6px;color:#000">20<span class="a" style="left:63px;top:10px;width:0;height:0;border-left:4px solid transparent;border-right:4px solid transparent;border-top:4px solid #999"></span></div>
<div class="a" style="left:1228px;top:709px;width:225px;height:20px;background:#f3f3f3"></div>
<div class="a" style="left:1228px;top:709px;width:112px;height:20px;background:#f3e08d"></div>
<div class="a" style="left:1228px;top:709px;width:225px;height:20px;line-height:20px;text-align:center;font-weight:bold;color:#666;font-size:13px">显示 1 - 20条，共 26 条</div>
<div class="a" style="left:0;top:740px;width:450px;height:2px;background:#bcbcbc"></div>
<div class="a" style="left:450px;top:740px;width:1px;height:2px;background:#888"></div>
<div class="a" style="left:451px;top:740px;width:792px;height:2px;background:#cbcbcb"></div>
<div class="a" style="left:1243px;top:740px;width:220px;height:2px;background:#d8d8d8"></div>
</body></html>
